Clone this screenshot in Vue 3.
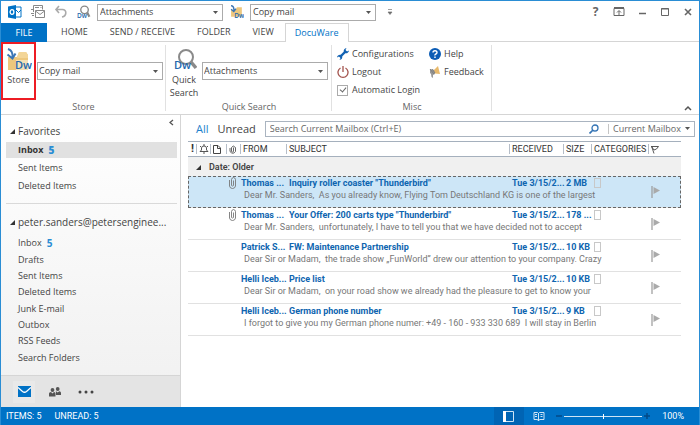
<script setup>
import { ref } from 'vue'

const tabs = ['HOME', 'SEND / RECEIVE', 'FOLDER', 'VIEW', 'DocuWare']
const favorites = [
  { name: 'Inbox', count: 5, selected: true },
  { name: 'Sent Items' },
  { name: 'Deleted Items' },
]
const folders = [
  { name: 'Inbox', count: 5 },
  { name: 'Drafts' },
  { name: 'Sent Items' },
  { name: 'Deleted Items' },
  { name: 'Junk E-mail' },
  { name: 'Outbox' },
  { name: 'RSS Feeds' },
  { name: 'Search Folders' },
]
const mails = [
  { clip: true, selected: true, from: 'Thomas ...', subject: 'Inquiry roller coaster "Thunderbird"', size: '2 MB', preview: 'Dear Mr. Sanders,\u00a0 As you already know, Flying Tom Deutschland KG is one of the largest' },
  { clip: true, from: 'Thomas ...', subject: 'Your Offer: 200 carts type "Thunderbird"', size: '178 ...', preview: 'Dear Mr. Sanders,\u00a0 unfortunately, I have to tell you that we have decided not to accept' },
  { from: 'Patrick S...', subject: 'FW: Maintenance Partnership', size: '10 KB', preview: 'Dear Sir or Madam,\u00a0 the trade show „FunWorld” drew our attention to your company. Crazy' },
  { from: 'Helli Iceb...', subject: 'Price list', size: '10 KB', preview: 'Dear Sir or Madam,\u00a0 on your road show we already had the pleasure to get to know your' },
  { from: 'Helli Iceb...', subject: 'German phone number', size: '9 KB', preview: 'I forgot to give you my German phone numer: +49 - 160 - 933 330 689\u00a0 I will stay in Berlin' },
]
const autoLogin = ref(true)
const zoom = ref(50)
</script>

<template>
  <div class="window">
    <header class="titlebar">
      <svg class="ic outlook" viewBox="0 0 14 14"><path d="M7 2h6v10H7z" fill="#fff" stroke="#0072c6" /><path d="M8 5l2.500 2.500L13 5" fill="none" stroke="#0072c6" /><path d="M0 1.500L8 0v14L0 12.500z" fill="#0072c6" /><ellipse cx="4" cy="7" rx="1.900" ry="2.300" fill="none" stroke="#fff" stroke-width="1.300" /></svg>
      <button class="tool" aria-label="Send and receive all folders"><svg class="ic" viewBox="0 0 14 14" fill="none" stroke="#888"><path d="M2.500 7V.5h9v4M4 2.500h4M9.500 2.500h1M0 8.500h3M1 10.500h2M0 4.500h2M4.500 5.500h9v7h-9zM4.500 6l4.500 3.500L13.500 6" /></svg></button>
      <button class="tool" aria-label="Undo"><svg class="ic" viewBox="0 0 14 14" fill="none" stroke="#aaa" stroke-width="1.600"><path d="M5 1L2 4.500 5 8M2 4.500h6.500c4.500 0 4.500 6.500-.5 7.500" /></svg></button>
      <button class="tool" aria-label="DocuWare search"><svg class="ic" viewBox="0 0 26 26"><circle cx="14" cy="9" r="7" fill="none" stroke="#888" stroke-width="2.500" /><path d="M19 14l4 8" stroke="#888" stroke-width="4" /><text x="0" y="24" class="dw small">Dw</text></svg></button>
      <span class="combo"><select aria-label="Search dialog"><option>Attachments</option></select><svg viewBox="0 0 6 4"><path d="M0 0h5L2.500 3z" /></svg></span>
      <button class="tool" aria-label="Store mail"><svg class="ic" viewBox="0 0 26 26"><path d="M2 9h8l3-5h9v18H2z" fill="#edc77d" /><path d="M2 1c5 1 6 4 5 10M2 8l5 4 4-5" fill="none" stroke="#3c76b5" stroke-width="2.500" /><text x="8" y="24" class="dw small">Dw</text></svg></button>
      <span class="combo"><select aria-label="Store configuration"><option>Copy mail</option></select><svg viewBox="0 0 6 4"><path d="M0 0h5L2.500 3z" /></svg></span>
      <button class="tool more" aria-label="Customize toolbar"><svg width="6" height="7" viewBox="0 0 6 7"><path d="M1 .5h4M1 3h4L3 5.500z" fill="#666" stroke="#777" stroke-width=".7" /></svg></button>
      <div class="controls">
        <button aria-label="Help" class="q">?</button>
        <button aria-label="Ribbon options"><svg width="12" height="10" viewBox="0 0 12 10" fill="none" stroke="#666"><path d="M1 1.500h10v7H1zM1 .5h10" /><path d="M6 8V4M4 5.500l2-2 2 2" /></svg></button>
        <button aria-label="Minimize"><svg width="12" height="10" viewBox="0 0 12 10"><path d="M3 6.500h7" stroke="#666" stroke-width="1.500" /></svg></button>
        <button aria-label="Maximize"><svg width="12" height="10" viewBox="0 0 12 10" fill="none" stroke="#666"><path d="M2.500 1.500h7v7h-7zM2 2h8" /></svg></button>
        <button aria-label="Close"><svg width="12" height="10" viewBox="0 0 12 10"><path d="M3 2l6 6M9 2L3 8" stroke="#666" stroke-width="1.600" /></svg></button>
      </div>
    </header>

    <nav class="tabs">
      <button class="file">FILE</button>
      <button v-for="t in tabs" :key="t" :class="{ active: t === 'DocuWare' }">{{ t }}</button>
    </nav>

    <section class="ribbon">
      <div class="group store">
        <div class="row">
          <button class="big marked">
            <svg width="26" height="24" viewBox="0 0 26 24"><path d="M2 9h9l2-5h7l2 3v15H2z" fill="#edc77d" /><path d="M13 4h7l2 3v3H11z" fill="#f3d597" /><path d="M2 1c4 1 5 4 4.500 9M1.500 6.500l5 4 3-5" fill="none" stroke="#3c76b5" stroke-width="2" /><path d="M10 12h15v10H10z" fill="#fff" opacity=".45" /><text x="9" y="21" class="dw mid">Dw</text></svg>
            <span>Store</span>
          </button>
          <span class="combo wide"><select aria-label="Store with"><option>Copy mail</option></select><svg viewBox="0 0 6 4"><path d="M0 0h5L2.500 3z" /></svg></span>
        </div>
        <span class="caption">Store</span>
      </div>
      <div class="group quick">
        <div class="row">
          <button class="big">
            <svg width="26" height="24" viewBox="0 0 26 24"><circle cx="15" cy="9" r="7" fill="none" stroke="#8a8a8a" stroke-width="2" /><path d="M20 14l5 6" stroke="#8a8a8a" stroke-width="3.500" /><text x="3" y="21" class="dw mid">Dw</text></svg>
            <span>Quick<br>Search</span>
          </button>
          <span class="combo wide"><select aria-label="Quick search with"><option>Attachments</option></select><svg viewBox="0 0 6 4"><path d="M0 0h5L2.500 3z" /></svg></span>
        </div>
        <span class="caption">Quick Search</span>
      </div>
      <div class="group misc">
        <div class="commands">
          <button><svg width="12" height="12" viewBox="0 0 12 12"><path d="M3 9l6-6" stroke="#1262b3" stroke-width="2.400" /><path d="M9.500 0Q6.500.5 6.700 3.500L8.500 5.300Q11.500 5.500 12 2.500L10 3.500 8.500 2zM2.500 12Q5.500 11.500 5.300 8.500L3.500 6.700Q.5 6.500 0 9.500L2 8.500 3.500 10z" fill="#1262b3" /></svg>Configurations</button>
          <button><svg width="12" height="12" viewBox="0 0 12 12"><circle cx="6" cy="6" r="6" fill="#0b5cb5" /><path d="M4 4.500Q4 2.700 6 2.700T8 4.500Q8 5.500 6.900 6T6 7.500M6 8.600v1.400" fill="none" stroke="#fff" stroke-width="1.400" /></svg>Help</button>
          <button><svg width="12" height="12" viewBox="0 0 12 12" fill="none" stroke="#a2524c" stroke-width="1.300"><path d="M3.500 2a5 5 0 1 0 5 0M6 0v6" /></svg>Logout</button>
          <button><svg width="12" height="12" viewBox="0 0 12 12"><path d="M1 3l5 1v4L4 9v3L2.500 11 2 8 1 7z" fill="#999" /><path d="M5 4l4-4 2 8-5-.5z" fill="#e8b96c" /><path d="M1 3l4 5M3 3l3 4" stroke="#777" stroke-width=".8" /></svg>Feedback</button>
          <label><input v-model="autoLogin" type="checkbox">Automatic Login</label>
        </div>
        <span class="caption">Misc</span>
      </div>
      <button class="fold" aria-label="Collapse the ribbon"><svg width="8" height="6" viewBox="0 0 8 6"><path d="M1 5l3-3 3 3" fill="none" stroke="#555" stroke-width="1.500" /></svg></button>
    </section>

    <div class="body">
      <aside class="sidebar">
        <button class="collapse" aria-label="Minimize the folder pane"><svg width="5" height="7" viewBox="0 0 5 7"><path d="M4 1L1 3.500 4 6" fill="none" stroke="#555" stroke-width="1.300" /></svg></button>
        <h2 class="fav"><svg width="5" height="5" viewBox="0 0 5 5"><path d="M5 0v5H0z" fill="#333" /></svg>Favorites</h2>
        <ul class="favorites">
          <li v-for="f in favorites" :key="f.name"><a href="#" :class="{ selected: f.selected }">{{ f.name }}<b v-if="f.count">{{ f.count }}</b></a></li>
        </ul>
        <h2 class="account"><svg width="5" height="5" viewBox="0 0 5 5"><path d="M5 0v5H0z" fill="#333" /></svg>peter.sanders@petersenginee...</h2>
        <ul class="folders">
          <li v-for="f in folders" :key="f.name"><a href="#">{{ f.name }}<b v-if="f.count">{{ f.count }}</b></a></li>
        </ul>
        <div class="modules">
          <button class="on" aria-label="Mail"><svg width="13" height="11" viewBox="0 0 13 11"><path d="M0 0h13v11H0z" fill="#0072c6" /><path d="M0 1.500l4.500 4q2 1.500 4 0l4.500-4" fill="none" stroke="#fff" stroke-width="1.300" /></svg></button>
          <button aria-label="People"><svg width="12" height="10" viewBox="0 0 12 10" fill="#555"><circle cx="3.500" cy="3" r="1.900" /><circle cx="8.700" cy="2" r="1.900" /><path d="M0 9.500V6.500Q0 5 2 5l1.500 1.500L5 5q1.500 0 1.500 1.500v3zM7 8V5.500Q6.500 4.500 7 4.200L8.700 5.500l1.500-1.300q1.800 0 1.800 1.500V8z" /></svg></button>
          <button aria-label="More"><svg width="16" height="4" viewBox="0 0 16 4" fill="#444"><circle cx="2" cy="2" r="1.500" /><circle cx="8" cy="2" r="1.500" /><circle cx="14" cy="2" r="1.500" /></svg></button>
        </div>
      </aside>

      <main class="content">
        <div class="filters">
          <button class="all">All</button>
          <button>Unread</button>
          <div class="search">
            <input type="text" aria-label="Search mailbox" placeholder="Search Current Mailbox (Ctrl+E)">
            <svg width="10" height="10" viewBox="0 0 10 10" fill="none" stroke="#3474b5"><circle cx="6" cy="4" r="3" stroke-width="1.300" /><path d="M4 6L.5 9.500" stroke-width="1.700" /></svg>
            <span class="combo scope"><select aria-label="Search scope"><option>Current Mailbox</option></select><svg viewBox="0 0 6 4"><path d="M0 0h5L2.500 3z" /></svg></span>
          </div>
        </div>

        <table>
          <colgroup>
            <col class="c8"><col class="c14"><col class="c16"><col class="c14"><col class="c46"><col><col class="c54"><col class="c28"><col class="c57"><col class="c33">
          </colgroup>
          <thead>
            <tr>
              <th class="bang">!</th>
              <th><svg width="10" height="10" viewBox="0 0 10 10" fill="none" stroke="#444" stroke-width=".9"><path d="M1 7.500h8L7.500 6V4Q7.500 2 5 2T2.500 4v2zM4 9h2M5 0v2M1 2l1 1M9 2L8 3" /></svg></th>
              <th><svg width="8" height="9" viewBox="0 0 8 9" fill="none" stroke="#444"><path d="M.5.5H5l2.500 2.500v5.500h-7zM4.500.5v3h3" /></svg></th>
              <th><svg width="7" height="9" viewBox="0 0 7 9" fill="none" stroke="#555" stroke-width=".9"><path d="M4.500 2.500v4q-1 1-2 0V2.500q1.500-3 4 0v4q-2.500 3.500-5.500 0V3" /></svg></th>
              <th>FROM</th>
              <th>SUBJECT</th>
              <th>RECEIVED</th>
              <th>SIZE</th>
              <th>CATEGORIES</th>
              <th><svg width="8" height="9" viewBox="0 0 8 9" fill="none" stroke="#444"><path d="M.5 1.500h7L5.500 4 3 5zM.5 1l2.500 7.500" stroke-width=".9" /></svg></th>
            </tr>
          </thead>
          <tbody class="groupby">
            <tr><td colspan="10"><svg width="5" height="5" viewBox="0 0 5 5"><path d="M5 0v5H0z" fill="#333" /></svg>Date: Older</td></tr>
          </tbody>
          <tbody v-for="(m, i) in mails" :key="i" class="mail" :class="{ selected: m.selected }">
            <tr class="top">
              <td colspan="4" class="clip"><svg v-if="m.clip" width="7" height="12" viewBox="0 0 7 12" fill="none" stroke="#777"><path d="M4.500 3.500v5q-1 1-2 0v-6Q3 .5 4.500.5T6.500 2.500V9Q6 11.500 3.500 11.500T.5 9V3" stroke-width=".9" /></svg></td>
              <td class="from">{{ m.from }}</td>
              <td>{{ m.subject }}</td>
              <td>Tue 3/15/2...</td>
              <td>{{ m.size }}</td>
              <td><i class="category"></i></td>
              <td rowspan="2" class="flag"><svg width="9" height="12" viewBox="0 0 9 12"><path d="M1 0v12" stroke="#999" stroke-width="1.200" /><path d="M2.500 1L9 4.500 2.500 8z" fill="#aaa" /></svg></td>
            </tr>
            <tr class="preview"><td colspan="4"></td><td colspan="5">{{ m.preview }}</td></tr>
          </tbody>
        </table>
      </main>
    </div>

    <footer class="status">
      <span>ITEMS: 5</span><span>UNREAD: 5</span>
      <div class="view">
        <button class="on" aria-label="Normal view"><svg width="12" height="11" viewBox="0 0 12 11"><path d="M.5.5h10v10H.5z" fill="none" stroke="#cfe4f5" /><path d="M0 0h3v11H0z" fill="#fff" /></svg></button>
        <button aria-label="Reading view"><svg width="12" height="11" viewBox="0 0 12 11" fill="none" stroke="#cfe4f5"><path d="M1 1.500h3.500L5.500 2.500 6.500 1.500H11v7H6.500L5.500 10 4.500 8.500H1zM5.500 2v8" /><path d="M2 3.500h2M2 5.500h2M7.500 3.500h2M7.500 5.500h2" /></svg></button>
        <button class="step" aria-label="Zoom out"><svg width="6" height="6" viewBox="0 0 6 6"><path d="M0 3h6" stroke="#034a87" stroke-width="1.500" /></svg></button>
        <input v-model="zoom" type="range" aria-label="Zoom" min="0" max="100">
        <button class="step" aria-label="Zoom in"><svg width="6" height="6" viewBox="0 0 6 6"><path d="M0 3h6M3 0v6" stroke="#034a87" stroke-width="1.500" /></svg></button>
        <span class="percent">100%</span>
      </div>
    </footer>
  </div>
</template>

<style>
body { background: #fff; }
</style>

<style scoped>
* { box-sizing: border-box; }
.window {
  min-height: 100vh;
  display: flex;
  flex-direction: column;
  border: 1px solid #2a8dd4;
  border-bottom: 0;
  background: #fff;
  color: #444;
  font: 9px/12px "Open Sans", "Noto Sans", sans-serif;
}
button, select, input {
  font: inherit;
  color: inherit;
  background: none;
  border: 0;
  border-radius: 0;
  padding: 0;
  margin: 0;
}
svg { display: block; flex: none; }
a { color: inherit; text-decoration: none; }
ul { list-style: none; margin: 0; padding: 0; }
.dw { font: 600 12px "Open Sans", sans-serif; fill: #2467ad; }
.dw.mid { font-size: 11px; }

.titlebar { height: 22px; display: flex; align-items: center; padding: 0 0 0 7px; }
.ic { width: 14px; height: 14px; }
.tool { width: 14px; margin-left: 9px; }
.combo { position: relative; display: flex; width: 126px; height: 17px; border: 1px solid #ababab; background: #fff; }
.titlebar .combo { margin-left: 6px; }
.combo select { appearance: none; width: 100%; padding: 0 12px 0 2px; outline: 0; }
.combo svg { position: absolute; right: 3px; top: 6px; width: 6px; height: 4px; fill: #555; pointer-events: none; }
.titlebar .combo + .tool { margin-left: 7px; }
.titlebar .more { display: flex; justify-content: center; }
.controls { margin-left: auto; display: flex; }
.controls button { width: 23px; display: flex; align-items: center; justify-content: center; }
.controls .q { font-weight: bold; font-size: 12px; color: #666; }

.tabs { height: 19px; display: flex; border-bottom: 1px solid #d5d5d5; }
.tabs button { padding: 0 11px; height: 18px; }
.tabs .file { width: 46px; height: 19px; padding: 0; margin-right: 3px; background: #0072c6; color: #fff; }
.tabs .active { height: 19px; padding: 0 9px; border: 1px solid #d5d5d5; border-bottom: 0; background: #fff; color: #0072c6; }

.ribbon { position: relative; height: 73px; display: flex; border-bottom: 1px solid #d5d5d5; }
.group { display: flex; flex-direction: column; justify-content: space-between; padding-bottom: 1px; position: relative; }
.group::after { content: ""; position: absolute; right: 0; top: 3px; bottom: 3px; border-right: 1px solid #e1e1e1; }
.group.store { width: 165px; }
.group.quick { width: 166px; }
.group.misc { width: 160px; }
.row { display: flex; align-items: flex-start; }
.big { width: 36px; height: 58px; display: flex; flex-direction: column; align-items: center; padding-top: 6px; line-height: 13px; gap: 1px; }
.big.marked { width: 35px; border: 2px solid #ed1c24; padding-top: 4px; }
.wide { margin-top: 20px; margin-left: 1px; height: 18px; }
.quick .wide { margin-left: 0; }
.wide select { padding-left: 1px; }
.wide svg { top: 7px; }
.caption { text-align: center; color: #666; }
.commands { display: grid; grid-template-columns: 92px 1fr; grid-auto-rows: 18px; padding: 3px 0 0 5px; }
.commands button { display: flex; align-items: center; gap: 3px; }
.commands label { display: flex; align-items: center; gap: 4px; white-space: nowrap; }
.commands input { appearance: none; width: 11px; height: 11px; border: 1px solid #ababab; background: #fff; }
.commands input:checked::before { content: ""; display: block; width: 3px; height: 5px; margin: 0 0 0 3px; border: solid #666; border-width: 0 1px 1px 0; transform: rotate(40deg); }
.fold { margin: auto 7px 3px auto; }

.body { flex: 1; display: flex; }
.sidebar { width: 180px; display: flex; flex-direction: column; border-right: 1px solid #d5d5d5; background: linear-gradient(#fff, #f0f0f0); position: relative; }
.collapse { position: absolute; right: 6px; top: 4px; }
h2 { display: flex; align-items: center; gap: 3px; margin: 0; padding-left: 9px; height: 20px; font-size: 10px; font-weight: normal; }
.fav { margin-top: 6px; }
.sidebar li { display: grid; }
.sidebar a { display: flex; align-items: center; gap: 5px; padding-left: 12px; margin: 0 3px 0 5px; min-height: 16px; }
.sidebar b { color: #2a8dd4; font-size: 10px; }
.favorites { display: grid; gap: 2px; margin-top: 1px; }
.sidebar .selected { background: #e1e1e1; font-weight: bold; color: #333; }
.account { margin: 9px 3px 0 5px; padding: 9px 0 0 4px; height: 28px; border-top: 1px solid #d9d9d9; }
.folders { display: grid; min-height: 131px; margin-top: 4px; margin-bottom: 7px; }
.modules { margin-top: auto; height: 32px; display: flex; align-items: center; gap: 9px; padding-left: 12px; background: #e4e4e4; border-top: 1px solid #d5d5d5; }
.modules button { width: 22px; height: 22px; display: grid; place-items: center; }
.modules .on { background: #e9e9e9; }

.content { flex: 1; min-width: 0; padding: 6px 4px 0 7px; }
.filters { display: flex; align-items: center; height: 16px; gap: 9px; padding-left: 8px; font-size: 11px; }
.all { color: #1e82cc; }
.search { flex: 1; display: flex; align-items: center; height: 16px; border: 1px solid #aab4c0; font-size: 9px; }
.search input { flex: 1; min-width: 0; padding: 0 4px; outline: 0; }
.search input::placeholder { color: #666; opacity: 1; }
.scope { border: 0; border-left: 1px solid #c5c5c5; width: 86px; height: 10px; margin-left: 9px; color: #666; align-items: center; }
.scope select { padding: 0 8px 0 4px; height: 14px; }
.scope svg { top: 3px; }

table { width: calc(100% - 14px); margin-right: 14px; margin-top: 4px; border-collapse: separate; border-spacing: 0; table-layout: fixed; font-family: Roboto, "Open Sans", sans-serif; }
.c8 { width: 8px; } .c14 { width: 14px; } .c16 { width: 16px; } .c46 { width: 46px; } .c54 { width: 54px; } .c28 { width: 28px; } .c57 { width: 57px; } .c33 { width: 33px; }
th { height: 16px; padding: 0 0 0 3px; border: solid #a5b0bd; border-width: 1px 0; text-align: left; font-weight: normal; line-height: 10px; white-space: nowrap; color: #333; background: linear-gradient(#b5bdc8, #b5bdc8) left center / 1px 10px no-repeat; }
.bang { font-weight: bold; font-size: 11px; background: none; }
td { padding: 0; white-space: nowrap; line-height: 12px; }
.groupby td { height: 19px; background: #f0f0f0; font-weight: 600; padding-left: 8px; }
.groupby svg { display: inline-block; margin-right: 8px; }
.top td { height: 13px; padding-left: 3px; color: #0e65b0; font-weight: bold; }
.top td.from { padding-left: 1px; }
.top td.clip { padding-left: 41px; }
.top td.flag { padding-left: 3px; border-bottom: 1px solid #e1e1e1; }
.category { display: block; width: 7px; height: 10px; border: 1px solid #c8c8c8; }
.preview td { height: 19px; padding: 0 0 6px 4px; color: #777; border-bottom: 1px solid #e1e1e1; }
.selected td { background: #cde6f7; }
.mail.selected { outline: 1px dashed #666; outline-offset: -1px; }

.status { height: 18px; display: flex; align-items: center; gap: 13px; padding-left: 5px; background: #0072c6; color: #fff; font-family: Roboto, "Open Sans", sans-serif; }
.view { margin-left: auto; display: flex; align-items: center; height: 18px; padding-right: 15px; }
.view button { width: 30px; height: 18px; display: grid; place-items: center; }
.view .on { background: #0064b4; }
.view .step { width: 10px; }
.view input { appearance: none; width: 78px; height: 12px; background: linear-gradient(#cfe4f5, #cfe4f5) center / 100% 1px no-repeat; }
.view input::-webkit-slider-thumb { appearance: none; width: 1px; height: 5px; background: #fff; }
.percent { width: 32px; text-align: right; }
</style>
